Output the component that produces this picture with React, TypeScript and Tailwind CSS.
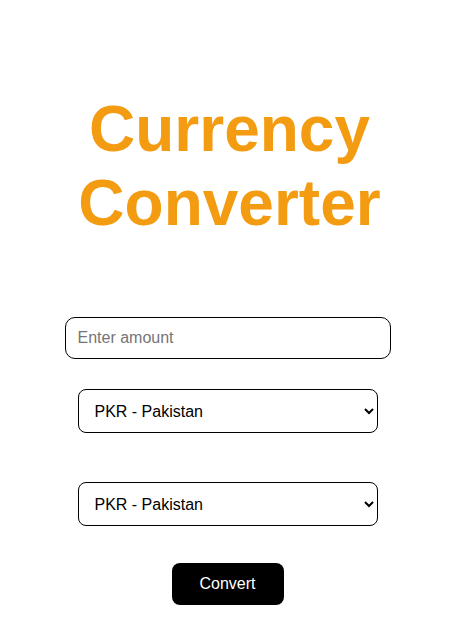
import React, { useState } from 'react';

const currencies = ['PKR - Pakistan', 'USD - United States', 'EUR - Europe', 'GBP - United Kingdom', 'INR - India'];

export default function App() {
  const [amount, setAmount] = useState('');
  const [from, setFrom] = useState(currencies[0]);
  const [to, setTo] = useState(currencies[0]);

  return (
    <div className="min-h-screen bg-white font-['Liberation_Sans',Arial,sans-serif]">
      <h1 className="pt-[92px] text-center text-[64px] font-bold leading-[74px] text-[#f39c12]">
        Currency
        <br />
        Converter
      </h1>

      <div className="mt-[77px] flex flex-col items-center pr-[4px]">
        <input
          type="text"
          placeholder="Enter amount"
          value={amount}
          onChange={(e) => setAmount(e.target.value)}
          className="h-[42px] w-[326px] rounded-[10px] border border-black px-3 text-base text-black outline-none placeholder:text-[#757575]"
        />

        <select
          value={from}
          onChange={(e) => setFrom(e.target.value)}
          className="mt-[30px] h-[44px] w-[300px] rounded-lg border border-black bg-white pl-3 text-base text-black"
        >
          {currencies.map((c) => (
            <option key={c} value={c}>{c}</option>
          ))}
        </select>

        <select
          value={to}
          onChange={(e) => setTo(e.target.value)}
          className="mt-[49px] h-[44px] w-[300px] rounded-lg border border-black bg-white pl-3 text-base text-black"
        >
          {currencies.map((c) => (
            <option key={c} value={c}>{c}</option>
          ))}
        </select>

        <button className="mt-[37px] h-[42px] w-[112px] rounded-lg bg-black text-base text-white">
          Convert
        </button>
      </div>
    </div>
  );
}
